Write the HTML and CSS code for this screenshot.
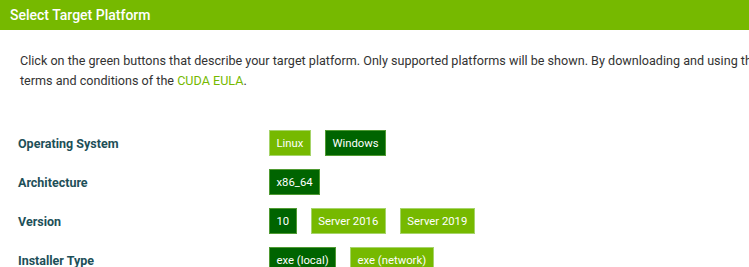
FILE: index.html
```html
<!DOCTYPE html>
<html lang="en">

<head>
    <meta charset="UTF-8">
    <meta name="viewport" content="width=device-width, initial-scale=1.0">
    <title>Select Target Platform</title>
    <link rel="stylesheet" href="styles.css">
</head>

<body>
    <div class="panel">
        <div class="panel-header">Select Target Platform</div>
        <div class="panel-body">
            <p class="intro">Click on the green buttons that describe your target platform. Only supported platforms will be shown. By downloading and using the<br>terms and conditions of the <a href="#">CUDA EULA</a>.</p>

            <div class="option-row">
                <div class="option-label">Operating System</div>
                <div class="option-buttons">
                    <button class="opt">Linux</button>
                    <button class="opt selected">Windows</button>
                </div>
            </div>
            <div class="option-row">
                <div class="option-label">Architecture</div>
                <div class="option-buttons">
                    <button class="opt selected">x86_64</button>
                </div>
            </div>
            <div class="option-row">
                <div class="option-label">Version</div>
                <div class="option-buttons">
                    <button class="opt selected">10</button>
                    <button class="opt">Server 2016</button>
                    <button class="opt">Server 2019</button>
                </div>
            </div>
            <div class="option-row">
                <div class="option-label">Installer Type</div>
                <div class="option-buttons">
                    <button class="opt selected">exe (local)</button>
                    <button class="opt">exe (network)</button>
                </div>
            </div>
        </div>
    </div>
</body>

</html>
```

FILE: styles.css
```css
html,
body {
    overflow: hidden;
}

body {
    font-family: Roboto, "DejaVu Sans", sans-serif;
    margin: 0;
    padding: 0;
    background-color: #ffffff;
    color: #333333;
}

.panel {
    width: 1000px;
}

.panel-header {
    height: 30px;
    line-height: 30px;
    padding-left: 10px;
    background-color: #76b900;
    color: #ffffff;
    font-size: 14px;
    font-weight: 500;
}

.panel-body {
    padding: 21px 18px 0 18px;
}

.intro {
    margin: 0 0 39px 2px;
    font-size: 12.6px;
    line-height: 20px;
    white-space: nowrap;
}

.intro a {
    color: #76b900;
    text-decoration: none;
}

.option-row {
    display: flex;
    align-items: center;
    margin-bottom: 13px;
}

.option-label {
    width: 251px;
    font-size: 12.5px;
    font-weight: 700;
    color: #1d4f58;
}

.option-buttons {
    display: flex;
    gap: 14px;
}

.opt {
    height: 26px;
    padding: 0 6.5px;
    font-family: inherit;
    font-size: 11.3px;
    color: #ffffff;
    background-color: #76b900;
    border: 1px solid #a6d46a;
    border-radius: 0;
    cursor: pointer;
}

.opt.selected {
    background-color: #006400;
    border-color: #4f9a33;
}
```
